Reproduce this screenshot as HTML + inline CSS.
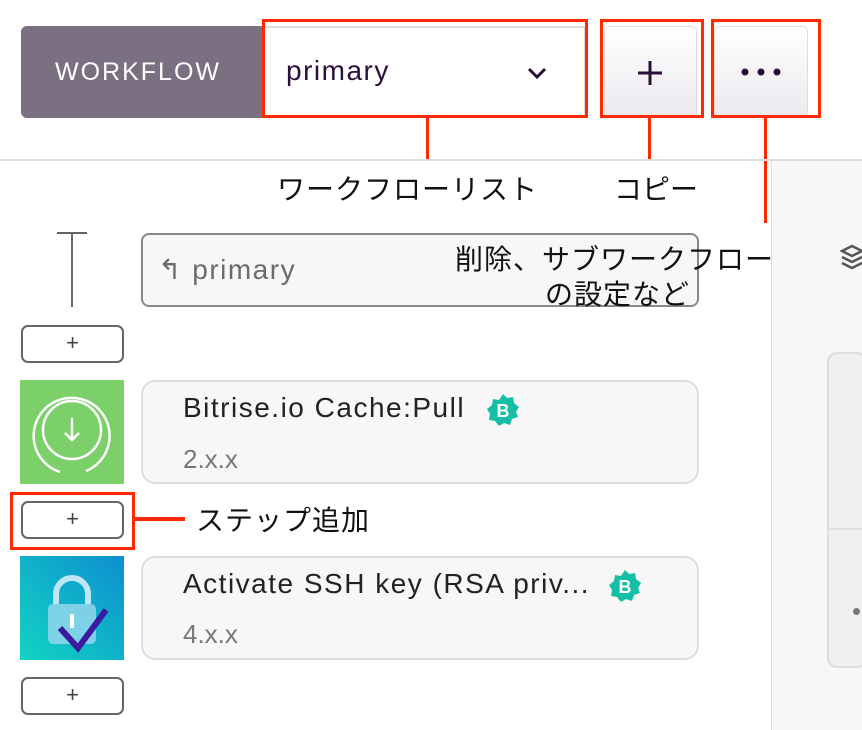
<!DOCTYPE html>
<html><head><meta charset="utf-8"><style>
body{margin:0;width:862px;height:730px;overflow:hidden;background:#fff;font-family:"Liberation Sans","Noto Sans CJK JP",sans-serif;position:relative}
.a{position:absolute;box-sizing:border-box}
.red{border:3px solid #ff2a00}
.jp{font-family:"Noto Sans CJK JP",sans-serif;font-size:28px;color:#111;white-space:nowrap;line-height:1}
.pl{border:2px solid #666;border-radius:7px;background:#fff;font-size:22px;color:#444;text-align:center;line-height:32px}
.card{background:#f7f7f7;border:2px solid #ddd;border-radius:14px}
.t{font-size:28px;letter-spacing:1.5px;color:#222;white-space:nowrap}
.v{font-size:26px;color:#777}
.b{width:34px;height:34px}
</style></head><body>
<div class="a" style="left:21px;top:26px;width:242px;height:92px;background:#7b6f82;border-radius:6px 0 0 6px;color:#fff;font-size:25px;letter-spacing:2px;line-height:92px;padding-left:34px">WORKFLOW</div>
<div class="a" style="left:262px;top:26px;width:324px;height:92px;background:#fff;border:2px solid #ddd"></div>
<div class="a" style="left:286px;top:55px;font-size:28px;letter-spacing:1.5px;color:#2b0e3a">primary</div>
<svg class="a" style="left:527px;top:66px" width="20" height="14"><path d="M2 3l8 8 8-8" stroke="#2b0e3a" stroke-width="3" fill="none"/></svg>
<div class="a" style="left:604px;top:26px;width:93px;height:92px;background:linear-gradient(#fff,#ece9ee);border:1px solid #ddd;border-radius:5px"></div>
<div class="a" style="left:714px;top:26px;width:94px;height:92px;background:linear-gradient(#fff,#ece9ee);border:1px solid #ddd;border-radius:5px"></div>
<svg class="a" style="left:637px;top:60px" width="26" height="26"><path d="M13 1v24M1 13h24" stroke="#2b0e3a" stroke-width="3"/></svg>
<svg class="a" style="left:738px;top:66px" width="46" height="12"><circle cx="7" cy="6" r="3.5" fill="#2b0e3a"/><circle cx="23" cy="6" r="3.5" fill="#2b0e3a"/><circle cx="39" cy="6" r="3.5" fill="#2b0e3a"/></svg>
<div class="a red" style="left:262px;top:19px;width:326px;height:99px"></div>
<div class="a red" style="left:600px;top:19px;width:104px;height:99px"></div>
<div class="a red" style="left:711px;top:19px;width:110px;height:99px"></div>
<div class="a" style="left:426px;top:117px;width:3px;height:42px;background:#ff2a00"></div>
<div class="a" style="left:648px;top:117px;width:3px;height:42px;background:#ff2a00"></div>
<div class="a" style="left:764px;top:117px;width:3px;height:106px;background:#ff2a00"></div>
<div class="a" style="left:0;top:159px;width:862px;height:2px;background:#ddd"></div>
<div class="a" style="left:771px;top:161px;width:91px;height:569px;background:#f7f7f7;border-left:1px solid #ddd"></div>
<div class="a" style="left:827px;top:352px;width:40px;height:316px;background:#f0f0f0;border:2px solid #ddd;border-radius:10px"></div>
<div class="a" style="left:829px;top:528px;width:35px;height:2px;background:#ddd"></div>
<div class="a" style="left:853px;top:608px;width:7px;height:7px;border-radius:50%;background:#777"></div>
<svg class="a" style="left:840px;top:243px" width="22" height="28"><path d="M2 8l10-5 10 5-10 5zM2 14l10 5 10-5M2 20l10 5 10-5" stroke="#555" stroke-width="2.5" fill="none"/></svg>
<div class="a jp" style="left:277px;top:174px;letter-spacing:1px">ワークフローリスト</div>
<div class="a jp" style="left:614px;top:174px">コピー</div>
<div class="a" style="left:71px;top:233px;width:2px;height:74px;background:#666"></div>
<div class="a" style="left:57px;top:232px;width:30px;height:2px;background:#666"></div>
<div class="a" style="left:141px;top:233px;width:558px;height:74px;background:#f7f7f7;border:2px solid #888;border-radius:8px"></div>
<div class="a" style="left:158px;top:253px;font-size:28px;letter-spacing:1.5px;color:#6b6b6b">↰ primary</div>
<div class="a jp" style="left:455px;top:244px;letter-spacing:1px">削除、サブワークフロー</div>
<div class="a jp" style="left:545px;top:279px;letter-spacing:1px">の設定など</div>
<div class="a pl" style="left:21px;top:325px;width:103px;height:38px">+</div>
<div class="a" style="left:20px;top:380px;width:104px;height:104px;background:#7bd069"></div>
<svg class="a" style="left:20px;top:380px" width="104" height="104"><circle cx="52" cy="50" r="29" stroke="#fff" stroke-width="2.5" fill="none"/><path d="M40 92a38 38 0 1 1 26 -1" stroke="#fff" stroke-width="2.5" fill="none"/><path d="M52 38v22M45 53l7 7 7-7" stroke="#fff" stroke-width="2.5" fill="none"/></svg>
<div class="a card" style="left:141px;top:380px;width:558px;height:104px"></div>
<div class="a t" style="left:183px;top:392px">Bitrise.io Cache:Pull</div>
<svg class="a b" style="left:486px;top:393px" viewBox="0 0 34 34"><path d="M17 1l4 4 6-1 1 6 5 4-3 5 2 5-6 2-2 6-6-2-5 3-4-5-6-1 1-6-3-5 5-4 1-6 6 1z" fill="#14bfa6"/><text x="17" y="24" font-size="18" font-weight="bold" fill="#fff" text-anchor="middle" font-family="Liberation Sans">B</text></svg>
<div class="a v" style="left:183px;top:444px">2.x.x</div>
<div class="a red" style="left:10px;top:492px;width:125px;height:58px"></div>
<div class="a pl" style="left:21px;top:501px;width:103px;height:38px">+</div>
<div class="a" style="left:134px;top:517px;width:51px;height:4px;background:#ff2a00"></div>
<div class="a jp" style="left:196px;top:505px;letter-spacing:1px">ステップ追加</div>
<div class="a" style="left:20px;top:556px;width:104px;height:104px;background:linear-gradient(45deg,#12d4c2,#0d8fd0)"></div>
<svg class="a" style="left:20px;top:556px" width="104" height="104"><path d="M36 48v-10a16 16 0 0 1 32 0v10" stroke="#bfe6f4" stroke-width="6" fill="none"/><rect x="28" y="48" width="48" height="40" rx="5" fill="#9ad8ee" opacity=".8"/><rect x="50" y="58" width="4" height="14" fill="#fff"/><path d="M40 72l18 20 28-38" stroke="#3a1aa0" stroke-width="6" fill="none"/></svg>
<div class="a card" style="left:141px;top:556px;width:558px;height:104px"></div>
<div class="a t" style="left:183px;top:568px">Activate SSH key (RSA priv...</div>
<svg class="a b" style="left:608px;top:569px" viewBox="0 0 34 34"><path d="M17 1l4 4 6-1 1 6 5 4-3 5 2 5-6 2-2 6-6-2-5 3-4-5-6-1 1-6-3-5 5-4 1-6 6 1z" fill="#14bfa6"/><text x="17" y="24" font-size="18" font-weight="bold" fill="#fff" text-anchor="middle" font-family="Liberation Sans">B</text></svg>
<div class="a v" style="left:183px;top:619px">4.x.x</div>
<div class="a pl" style="left:21px;top:677px;width:103px;height:38px">+</div>
</body></html>
